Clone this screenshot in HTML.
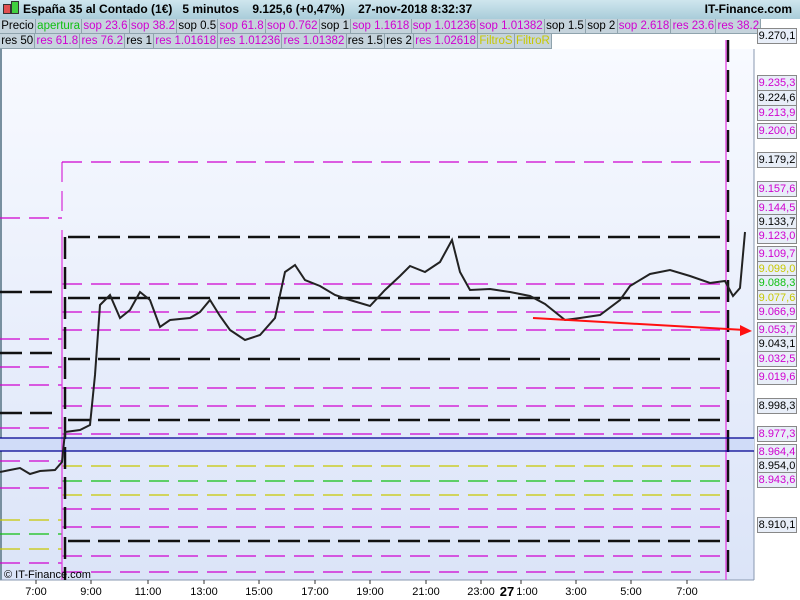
<!DOCTYPE html><html><head><style>
body{margin:0;width:800px;height:600px;overflow:hidden;font-family:"Liberation Sans",sans-serif;background:#fff;position:relative}
#hd{position:absolute;left:0;top:0;width:800px;height:19px;background:linear-gradient(#cfe6ee,#a9ccd9);font-weight:bold;font-size:12px;line-height:19px}
.row{position:absolute;left:0;display:flex;height:15px;font-size:11.5px;line-height:14px}
.row span{background:#c5d3dc;border:1px solid #8fa3ad;border-top:0;border-left:0;padding:0 1.2px;white-space:nowrap}
.m{color:#d000d0}.g{color:#10c010}.y{color:#c8c800}
.lb{position:absolute;left:757px;width:38px;height:14px;border:1px solid #888;background:#e8eef8;font-size:11px;line-height:14px;text-align:center}
.t{position:absolute;top:586px;font-size:11px;transform:translateX(-50%)}
</style></head><body>
<div id="hd"><span style="position:absolute;left:3px;top:4px;width:6px;height:8px;background:#e05050;border:1px solid #333"></span><span style="position:absolute;left:11px;top:1px;width:6px;height:11px;background:#40d040;border:1px solid #333"></span><span style="position:absolute;left:23px">España 35 al Contado (1€)&nbsp;&nbsp; 5 minutos&nbsp;&nbsp;&nbsp; 9.125,6 (+0,47%)&nbsp;&nbsp;&nbsp; 27-nov-2018 8:32:37</span><span style="position:absolute;right:8px">IT-Finance.com</span></div>
<svg width="800" height="600" style="position:absolute;left:0;top:0">
<defs><linearGradient id="bg" x1="0" y1="0" x2="0" y2="1"><stop offset="0" stop-color="#f8faff"/><stop offset="1" stop-color="#dbe4f8"/></linearGradient></defs>
<rect x="0" y="49" width="754" height="531" fill="url(#bg)"/>
<line x1="1" y1="49" x2="1" y2="580" stroke="#7890a0" stroke-width="2"/>
<line x1="754" y1="49" x2="754" y2="580" stroke="#8898b0"/>
<line x1="0" y1="580" x2="754" y2="580" stroke="#8898b0"/>
<rect x="0" y="438" width="754" height="13" fill="#d0dcf8"/>
<g stroke="#d000d0" stroke-width="1.3" stroke-dasharray="20,9" fill="none">
<path d="M62 162H727M0 218H62M62 284H727M62 312H727M62 330H727M62 388H727M62 406H727M62 434H727M62 509H727M62 527H727M62 556H727M62 572H727M0 339H62M0 367H62M0 385H62M0 428H62M0 461H62M0 488H62M0 563H62"/>
</g>
<g stroke="#c8c800" stroke-width="1.3" stroke-dasharray="20,9"><path d="M62 466H727M62 495H727M0 520H62M0 549H62"/></g>
<g stroke="#10c010" stroke-width="1.3" stroke-dasharray="20,9"><path d="M62 481H727M0 534H62"/></g>
<g stroke="#111" stroke-width="2.5" stroke-dasharray="22,8"><path d="M68 237H727M0 292H55M68 298H727M0 353H55M68 359H727M0 413H55M68 420H727M68 541H727M65 237V580M728 40V580"/></g>
<path d="M62 162V218" stroke="#d000d0" stroke-dasharray="20,9"/>
<path d="M62 230V580M726 40V580" stroke="#e040e0" stroke-width="1.3"/>
<path d="M0 438H754M0 451H754" stroke="#000090" stroke-width="1.3"/>
<polyline fill="none" stroke="#222" stroke-width="2" points="0,472 10,470 20,468 30,474 40,471 55,470 62,462 65,432 80,430 90,425 95,375 100,305 110,295 120,318 130,310 140,292 150,300 160,327 170,320 190,318 200,312 210,300 220,316 230,330 245,340 260,335 275,318 285,272 295,265 305,280 320,286 335,295 350,300 370,306 385,290 400,276 410,266 425,272 440,262 452,240 460,272 470,290 490,289 510,292 530,296 545,304 565,320 580,318 600,315 620,300 630,286 650,274 670,270 690,276 710,283 725,281 733,296 740,288 745,232"/>
<path d="M533 318L745 330" stroke="#ff1010" stroke-width="2"/><path d="M752 331L740 325L740 336Z" fill="#ff1010"/>
<g stroke="#333"><path d="M36 580v4M91 580v4M148 580v4M204 580v4M259 580v4M315 580v4M370 580v4M426 580v4M481 580v4M521 580v4M576 580v4M631 580v4M687 580v4"/></g>
<text x="4" y="578" font-size="11" font-family="Liberation Sans">© IT-Finance.com</text>
</svg>
<div class="row" style="top:19px"><span>Precio</span><span class="g">apertura</span><span class="m">sop 23.6</span><span class="m">sop 38.2</span><span>sop 0.5</span><span class="m">sop 61.8</span><span class="m">sop 0.762</span><span>sop 1</span><span class="m">sop 1.1618</span><span class="m">sop 1.01236</span><span class="m">sop 1.01382</span><span>sop 1.5</span><span>sop 2</span><span class="m">sop 2.618</span><span class="m">res 23.6</span><span class="m">res 38.2</span></div>
<div class="row" style="top:34px"><span>res 50</span><span class="m">res 61.8</span><span class="m">res 76.2</span><span>res 1</span><span class="m">res 1.01618</span><span class="m">res 1.01236</span><span class="m">res 1.01382</span><span>res 1.5</span><span>res 2</span><span class="m">res 1.02618</span><span class="y">FiltroS</span><span class="y">FiltroR</span></div>
<div class="lb" style="top:28px">9.270,1</div>
<div class="lb m" style="top:75px">9.235,3</div>
<div class="lb" style="top:90px">9.224,6</div>
<div class="lb m" style="top:105px">9.213,9</div>
<div class="lb m" style="top:123px">9.200,6</div>
<div class="lb" style="top:152px">9.179,2</div>
<div class="lb m" style="top:181px">9.157,6</div>
<div class="lb m" style="top:200px">9.144,5</div>
<div class="lb" style="top:214px">9.133,7</div>
<div class="lb m" style="top:228px">9.123,0</div>
<div class="lb m" style="top:246px">9.109,7</div>
<div class="lb y" style="top:261px">9.099,0</div>
<div class="lb g" style="top:275px">9.088,3</div>
<div class="lb y" style="top:290px">9.077,6</div>
<div class="lb m" style="top:304px">9.066,9</div>
<div class="lb m" style="top:322px">9.053,7</div>
<div class="lb" style="top:336px">9.043,1</div>
<div class="lb m" style="top:351px">9.032,5</div>
<div class="lb m" style="top:369px">9.019,6</div>
<div class="lb" style="top:398px">8.998,3</div>
<div class="lb m" style="top:426px">8.977,3</div>
<div class="lb m" style="top:444px">8.964,4</div>
<div class="lb" style="top:458px">8.954,0</div>
<div class="lb m" style="top:472px">8.943,6</div>
<div class="lb" style="top:517px">8.910,1</div>
<div class="t" style="left:36px">7:00</div><div class="t" style="left:91px">9:00</div><div class="t" style="left:148px">11:00</div><div class="t" style="left:204px">13:00</div><div class="t" style="left:259px">15:00</div><div class="t" style="left:315px">17:00</div><div class="t" style="left:370px">19:00</div><div class="t" style="left:426px">21:00</div><div class="t" style="left:481px">23:00</div><div class="t" style="left:507px;font-weight:bold;font-size:13px;top:584px">27</div><div class="t" style="left:527px">1:00</div><div class="t" style="left:576px">3:00</div><div class="t" style="left:631px">5:00</div><div class="t" style="left:687px">7:00</div>
</body></html>
